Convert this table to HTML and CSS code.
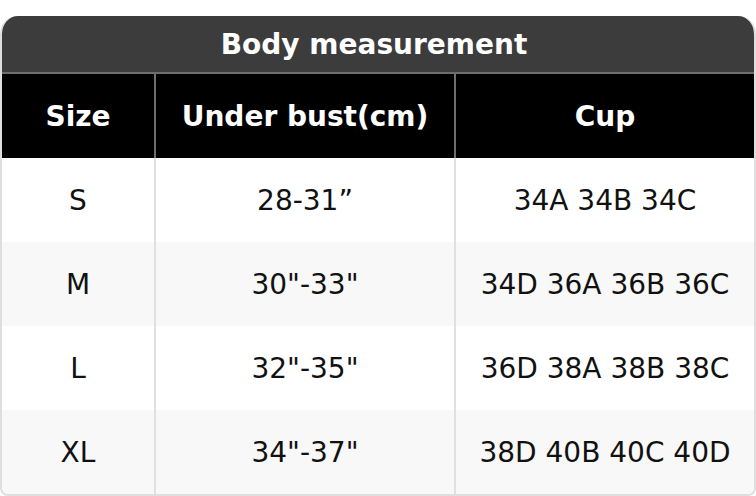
FILE: index.html
```html
<!DOCTYPE html>
<html lang="en">
<head>
<meta charset="utf-8">
<title>Body measurement</title>
<link rel="stylesheet" href="styles.css">
</head>
<body>
<div class="card">
  <div class="title">Body measurement</div>
  <div class="grid">
    <div class="cell head">Size</div>
    <div class="cell head">Under bust(cm)</div>
    <div class="cell head last">Cup</div>

    <div class="cell">S</div>
    <div class="cell">28-31”</div>
    <div class="cell last">34A 34B 34C</div>

    <div class="cell alt">M</div>
    <div class="cell alt">30"-33"</div>
    <div class="cell alt last">34D 36A 36B 36C</div>

    <div class="cell">L</div>
    <div class="cell">32"-35"</div>
    <div class="cell last">36D 38A 38B 38C</div>

    <div class="cell alt">XL</div>
    <div class="cell alt">34"-37"</div>
    <div class="cell alt last">38D 40B 40C 40D</div>
  </div>
</div>
</body>
</html>
```

FILE: styles.css
```css
html, body {
  margin: 0;
  padding: 0;
  background: #fff;
}
body {
  padding-top: 16px;
  font-family: "DejaVu Sans", "Liberation Sans", sans-serif;
}
.card {
  width: 756px;
  box-sizing: border-box;
  border: 2px solid #dedede;
  border-top: 0;
  border-radius: 18px 18px 8px 8px;
  overflow: hidden;
}
.title {
  height: 56px;
  margin: 0 -2px;
  padding-right: 8px;
  background: #3c3c3c;
  color: #fff;
  font-weight: bold;
  font-size: 28px;
  display: flex;
  align-items: center;
  justify-content: center;
  border-bottom: 2px solid #6e6e6e;
}
.grid {
  display: grid;
  grid-template-columns: 154px 300px 298px;
  grid-auto-rows: 84px;
}
.cell {
  display: flex;
  align-items: center;
  justify-content: center;
  font-size: 28px;
  color: #111;
  background: #fff;
  border-right: 2px solid #e0e0e0;
}
.cell.last {
  border-right: 0;
}
.cell.alt {
  background: #f8f8f8;
}
.cell.head {
  background: #000;
  color: #fff;
  font-weight: bold;
  border-right-color: #6e6e6e;
}
```
